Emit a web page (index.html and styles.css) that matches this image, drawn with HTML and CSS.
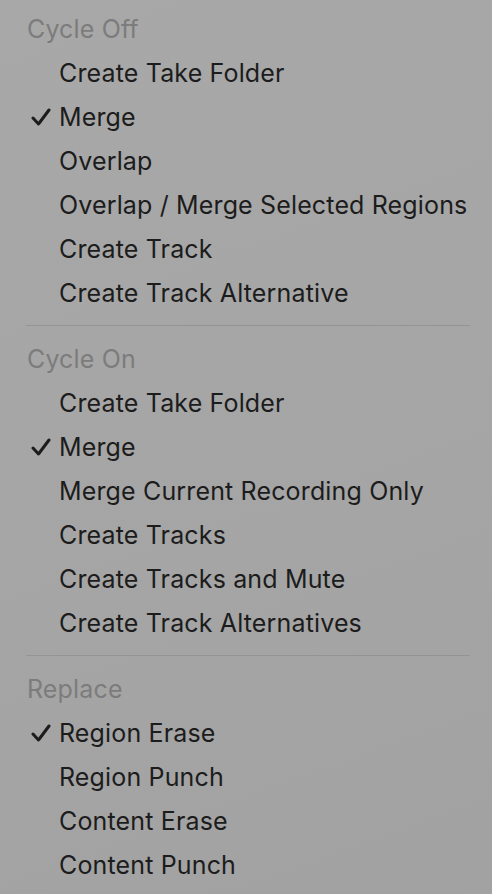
FILE: index.html
```html
<!DOCTYPE html>
<html>
<head>
<meta charset="utf-8">
<link rel="stylesheet" href="styles.css">
</head>
<body>
<div class="menu">
  <div class="header">Cycle Off</div>
  <div class="item"><span class="mark"></span>Create Take Folder</div>
  <div class="item"><span class="mark"><svg viewBox="0 0 20 18" width="20" height="18"><path d="M2 10 L7.5 16 L18 2" fill="none" stroke="#1c1c1c" stroke-width="3" stroke-linecap="round" stroke-linejoin="round"/></svg></span>Merge</div>
  <div class="item"><span class="mark"></span>Overlap</div>
  <div class="item"><span class="mark"></span>Overlap / Merge Selected Regions</div>
  <div class="item"><span class="mark"></span>Create Track</div>
  <div class="item"><span class="mark"></span>Create Track Alternative</div>
  <div class="sep"></div>
  <div class="header">Cycle On</div>
  <div class="item"><span class="mark"></span>Create Take Folder</div>
  <div class="item"><span class="mark"><svg viewBox="0 0 20 18" width="20" height="18"><path d="M2 10 L7.5 16 L18 2" fill="none" stroke="#1c1c1c" stroke-width="3" stroke-linecap="round" stroke-linejoin="round"/></svg></span>Merge</div>
  <div class="item"><span class="mark"></span>Merge Current Recording Only</div>
  <div class="item"><span class="mark"></span>Create Tracks</div>
  <div class="item"><span class="mark"></span>Create Tracks and Mute</div>
  <div class="item"><span class="mark"></span>Create Track Alternatives</div>
  <div class="sep"></div>
  <div class="header">Replace</div>
  <div class="item"><span class="mark"><svg viewBox="0 0 20 18" width="20" height="18"><path d="M2 10 L7.5 16 L18 2" fill="none" stroke="#1c1c1c" stroke-width="3" stroke-linecap="round" stroke-linejoin="round"/></svg></span>Region Erase</div>
  <div class="item"><span class="mark"></span>Region Punch</div>
  <div class="item"><span class="mark"></span>Content Erase</div>
  <div class="item"><span class="mark"></span>Content Punch</div>
</div>
</body>
</html>
```

FILE: styles.css
```css
html, body {
  margin: 0;
  padding: 0;
  height: 100%;
}
body {
  background: linear-gradient(160deg, #a8a8a8 0%, #a5a5a5 60%, #a2a2a2 100%);
  font-family: "Inter", "Liberation Sans", sans-serif;
  overflow: hidden;
}
.menu {
  display: flex;
  flex-direction: column;
  padding-top: 7px;
}
.header {
  height: 44px;
  display: flex;
  align-items: center;
  padding-left: 27px;
  font-size: 25px;
  color: #7c7c7c;
  letter-spacing: 0.15px;
}
.item {
  height: 44px;
  display: flex;
  align-items: center;
  padding-left: 31px;
  font-size: 25px;
  color: #1c1c1c;
  letter-spacing: 0.15px;
}
.mark {
  width: 28px;
  height: 18px;
  display: flex;
  align-items: center;
  flex: none;
}
.mark svg {
  display: block;
}
.sep {
  height: 1px;
  margin: 10px 22px 11px 26px;
  background: #949494;
}
```
